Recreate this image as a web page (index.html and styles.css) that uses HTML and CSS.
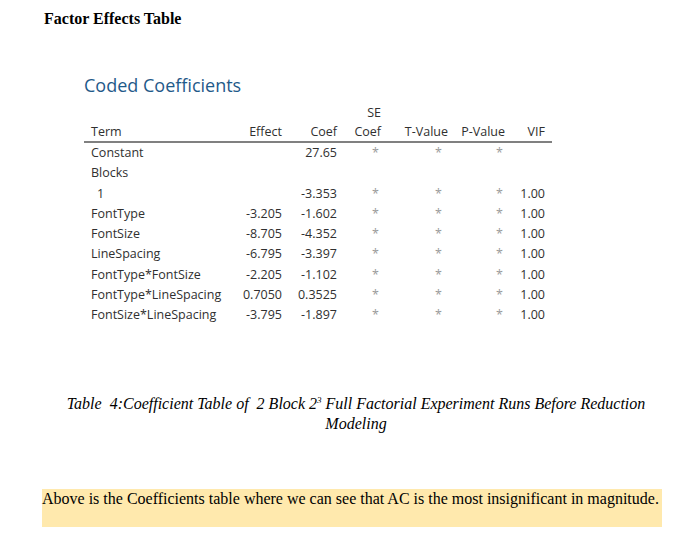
FILE: index.html
```html
<!DOCTYPE html>
<html>
<head>
<meta charset="utf-8">
<link rel="stylesheet" href="styles.css">
</head>
<body>
<div class="page">
  <h1 class="doc-title">Factor Effects Table</h1>
  <div class="output">
    <h2 class="out-title">Coded Coefficients</h2>
    <table class="coef">
      <colgroup>
        <col class="c-term"><col class="c-eff"><col class="c-coef"><col class="c-se"><col class="c-t"><col class="c-p"><col class="c-vif">
      </colgroup>
      <thead>
        <tr class="h1"><th class="term"></th><th></th><th></th><th>SE</th><th></th><th></th><th></th></tr>
        <tr class="h2"><th class="term">Term</th><th>Effect</th><th>Coef</th><th>Coef</th><th>T-Value</th><th>P-Value</th><th>VIF</th></tr>
      </thead>
      <tbody>
        <tr><td class="term">Constant</td><td></td><td>27.65</td><td class="st">*</td><td class="st tv">*</td><td class="st">*</td><td></td></tr>
        <tr><td class="term">Blocks</td><td></td><td></td><td></td><td></td><td></td><td></td></tr>
        <tr><td class="term ind">1</td><td></td><td>-3.353</td><td class="st">*</td><td class="st tv">*</td><td class="st">*</td><td>1.00</td></tr>
        <tr><td class="term">FontType</td><td>-3.205</td><td>-1.602</td><td class="st">*</td><td class="st tv">*</td><td class="st">*</td><td>1.00</td></tr>
        <tr><td class="term">FontSize</td><td>-8.705</td><td>-4.352</td><td class="st">*</td><td class="st tv">*</td><td class="st">*</td><td>1.00</td></tr>
        <tr><td class="term">LineSpacing</td><td>-6.795</td><td>-3.397</td><td class="st">*</td><td class="st tv">*</td><td class="st">*</td><td>1.00</td></tr>
        <tr><td class="term">FontType*FontSize</td><td>-2.205</td><td>-1.102</td><td class="st">*</td><td class="st tv">*</td><td class="st">*</td><td>1.00</td></tr>
        <tr><td class="term">FontType*LineSpacing</td><td>0.7050</td><td>0.3525</td><td class="st">*</td><td class="st tv">*</td><td class="st">*</td><td>1.00</td></tr>
        <tr><td class="term">FontSize*LineSpacing</td><td>-3.795</td><td>-1.897</td><td class="st">*</td><td class="st tv">*</td><td class="st">*</td><td>1.00</td></tr>
      </tbody>
    </table>
  </div>
  <p class="caption">Table&nbsp; 4:Coefficient Table of&nbsp; 2 Block 2<sup>3</sup> Full Factorial Experiment Runs Before Reduction Modeling</p>
  <p class="note"><span class="hl">Above is the Coefficients table where we can see that AC is the most insignificant in magnitude.</span></p>
</div>
</body>
</html>
```

FILE: styles.css
```css
html, body {
  margin: 0;
  padding: 0;
  background: #ffffff;
}

.page {
  font-family: "Liberation Serif", "Times New Roman", serif;
  color: #000;
}

.doc-title {
  margin: 0;
  padding: 10px 0 0 44px;
  font-size: 16px;
  font-weight: bold;
  line-height: 18px;
}

.output {
  padding: 45px 0 0 84px;
  font-family: "Open Sans", "Noto Sans", sans-serif;
}

.out-title {
  margin: 0 0 7px 0;
  font-size: 18px;
  font-weight: normal;
  color: #1f5a8a;
  line-height: 24px;
}

.coef {
  border-collapse: collapse;
  table-layout: fixed;
  width: 468px;
  font-size: 12.5px;
  color: #303030;
}

.c-term { width: 146px; }
.c-eff { width: 52px; }
.c-coef { width: 55px; }
.c-se { width: 44px; }
.c-t { width: 67px; }
.c-p { width: 57px; }
.c-vif { width: 47px; }

.coef th, .coef td {
  padding: 0;
  text-align: right;
  font-weight: normal;
  white-space: nowrap;
  line-height: 20.25px;
  height: 20.25px;
}

.coef .h1 th {
  line-height: 18px;
  height: 18px;
}

.coef .h2 th {
  border-bottom: 2px solid #808080;
  line-height: 19px;
  height: 19px;
}

.coef .term {
  text-align: left;
  padding-left: 7px;
}

.coef .ind {
  padding-left: 13px;
}

.coef .st {
  color: #9a9a9a;
  padding-right: 2px;
}

.coef .st.tv {
  padding-right: 6px;
}

.coef th:last-child, .coef td:last-child {
  padding-right: 7px;
}

.caption {
  margin: 69px 0 0 42px;
  width: 628px;
  text-align: center;
  font-style: italic;
  font-size: 16px;
  line-height: 20px;
}

.caption sup {
  font-size: 9px;
  line-height: 0;
  vertical-align: 6px;
}

.note {
  margin: 55px 0 0 42px;
  width: 620px;
  background: #ffe9ad;
  font-size: 16px;
  line-height: 20px;
  padding: 0 0 18px 0;
}
```
